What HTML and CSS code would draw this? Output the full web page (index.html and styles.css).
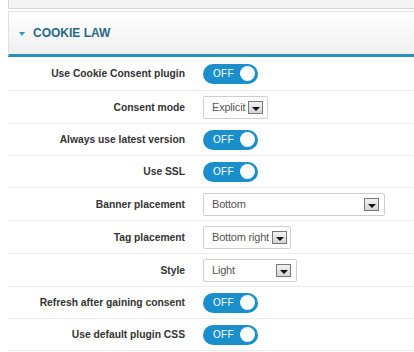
FILE: index.html
```html
<!DOCTYPE html>
<html lang="en">
<head>
  <meta charset="UTF-8" />
  <meta name="viewport" content="width=device-width, initial-scale=1.0" />
  <title>Cookie Law</title>
  <link rel="stylesheet" href="styles.css">
</head>
<body>
  <div class="top-panel"></div>

  <div class="section-head">
    <span class="caret"></span>
    <h2>Cookie Law</h2>
  </div>

  <div class="form-rows">
    <div class="row first">
      <label>Use Cookie Consent plugin</label>
      <div class="field"><span class="toggle">OFF<i></i></span></div>
    </div>
    <div class="row tall">
      <label>Consent mode</label>
      <div class="field"><span class="select w-65">Explicit<b></b></span></div>
    </div>
    <div class="row">
      <label>Always use latest version</label>
      <div class="field"><span class="toggle">OFF<i></i></span></div>
    </div>
    <div class="row">
      <label>Use SSL</label>
      <div class="field"><span class="toggle">OFF<i></i></span></div>
    </div>
    <div class="row tall">
      <label>Banner placement</label>
      <div class="field"><span class="select w-182">Bottom<b></b></span></div>
    </div>
    <div class="row tall">
      <label>Tag placement</label>
      <div class="field"><span class="select w-88">Bottom right<b></b></span></div>
    </div>
    <div class="row tall">
      <label>Style</label>
      <div class="field"><span class="select w-94">Light<b></b></span></div>
    </div>
    <div class="row">
      <label>Refresh after gaining consent</label>
      <div class="field"><span class="toggle">OFF<i></i></span></div>
    </div>
    <div class="row">
      <label>Use default plugin CSS</label>
      <div class="field"><span class="toggle">OFF<i></i></span></div>
    </div>
  </div>
</body>
</html>
```

FILE: styles.css
```css
body {
  margin: 0 0 0 8px;
  background: #fff;
  font-family: 'Liberation Sans', Arial, sans-serif;
  color: #333;
  overflow: hidden;
}
.top-panel {
  height: 8px;
  background: #f4f4f4;
  border: 1px solid #d6d6d6;
  border-top: none;
  margin-right: -10px;
}
.section-head {
  margin-top: 2px;
  margin-right: -10px;
  height: 42px;
  border: 1px solid #e0e0e0;
  border-bottom: 3px solid #2594b8;
  background: linear-gradient(#ffffff, #efefef);
  display: flex;
  align-items: center;
  padding-left: 10px;
}
.caret {
  width: 0;
  height: 0;
  border-left: 3px solid transparent;
  border-right: 3px solid transparent;
  border-top: 4px solid #2a9ab8;
  margin-right: 8px;
  margin-top: 1px;
}
.section-head h2 {
  margin: 0;
  font-size: 12px;
  font-weight: bold;
  text-transform: uppercase;
  color: #28698a;
}
.form-rows {
  margin-right: -10px;
}
.row {
  display: flex;
  align-items: center;
  height: 31px;
  border-bottom: 1px solid #ececec;
}
.row.tall {
  height: 32px;
}
.row.first {
  height: 33px;
}
.row label {
  width: 177px;
  text-align: right;
  font-size: 10.3px;
  font-weight: bold;
  color: #333;
}
.field {
  padding-left: 18px;
  display: flex;
  align-items: center;
}
.toggle {
  display: flex;
  align-items: center;
  justify-content: space-between;
  box-sizing: border-box;
  width: 55px;
  height: 20px;
  padding: 0 3px 0 10px;
  border-radius: 10px;
  background: #1a8fcb;
  color: #fff;
  font-size: 10px;
  letter-spacing: 0.3px;
}
.toggle i {
  width: 15px;
  height: 15px;
  border-radius: 50%;
  background: #fff;
}
.select {
  display: flex;
  align-items: center;
  justify-content: space-between;
  box-sizing: border-box;
  height: 23px;
  padding: 0 5px 0 8px;
  border: 1px solid #cfcfcf;
  border-radius: 2px;
  background: #fff;
  font-size: 11px;
  color: #555;
  letter-spacing: -0.2px;
  white-space: nowrap;
}
.select b {
  position: relative;
  flex-shrink: 0;
  box-sizing: border-box;
  width: 15px;
  height: 13px;
  margin-left: 3px;
  border: 1px solid #777;
  background: linear-gradient(#f2f2f2, #d4d4d4);
}
.select b::after {
  content: "";
  position: absolute;
  left: 3px;
  top: 5px;
  border-left: 4px solid transparent;
  border-right: 4px solid transparent;
  border-top: 4px solid #111;
}
.w-65 { width: 65px; }
.w-182 { width: 182px; }
.w-88 { width: 88px; }
.w-94 { width: 94px; }
```
